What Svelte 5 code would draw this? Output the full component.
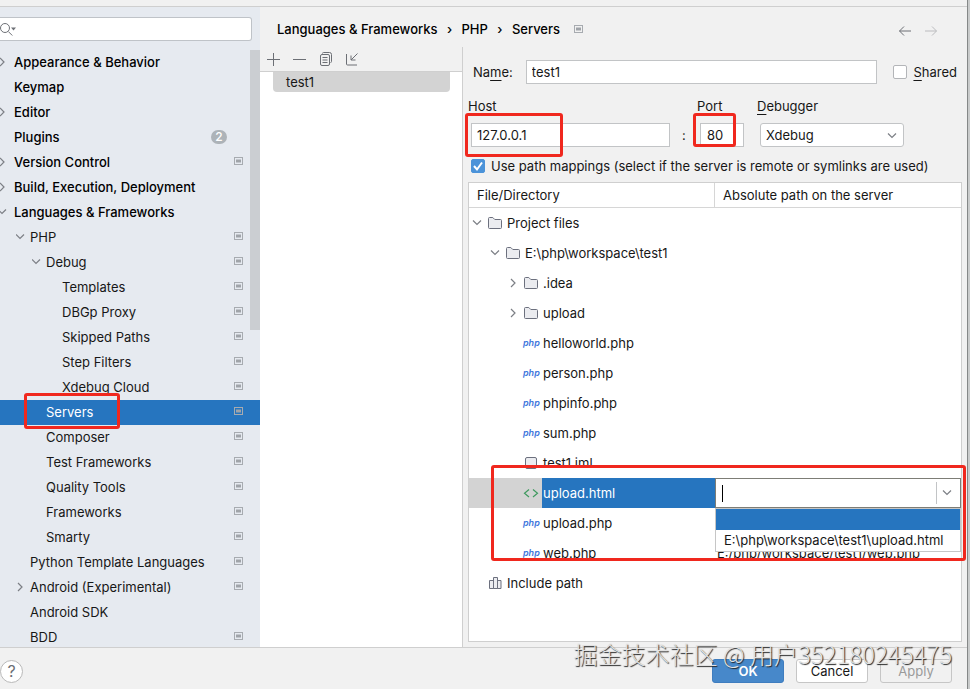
<script>
  const settings = [
    { label: "Appearance & Behavior", level: 0, arrow: "right", bold: true },
    { label: "Keymap", level: 0, bold: true },
    { label: "Editor", level: 0, arrow: "right", bold: true },
    { label: "Plugins", level: 0, bold: true, badge: 2 },
    { label: "Version Control", level: 0, arrow: "right", bold: true, project: true },
    { label: "Build, Execution, Deployment", level: 0, arrow: "right", bold: true },
    { label: "Languages & Frameworks", level: 0, arrow: "down", bold: true },
    { label: "PHP", level: 1, arrow: "down", project: true },
    { label: "Debug", level: 2, arrow: "down", project: true },
    { label: "Templates", level: 3, project: true },
    { label: "DBGp Proxy", level: 3, project: true },
    { label: "Skipped Paths", level: 3, project: true },
    { label: "Step Filters", level: 3, project: true },
    { label: "Xdebug Cloud", level: 3, project: true },
    { label: "Servers", level: 2, project: true, selected: true },
    { label: "Composer", level: 2, project: true },
    { label: "Test Frameworks", level: 2, project: true },
    { label: "Quality Tools", level: 2, project: true },
    { label: "Frameworks", level: 2, project: true },
    { label: "Smarty", level: 2, project: true },
    { label: "Python Template Languages", level: 1, project: true },
    { label: "Android (Experimental)", level: 1, arrow: "right", project: true },
    { label: "Android SDK", level: 1 },
    { label: "BDD", level: 1, project: true },
  ];

  const files = [
    { name: "Project files", level: 0, arrow: "down", icon: "folder" },
    { name: "E:\\php\\workspace\\test1", level: 1, arrow: "down", icon: "folder" },
    { name: ".idea", level: 2, arrow: "right", icon: "folder" },
    { name: "upload", level: 2, arrow: "right", icon: "folder" },
    { name: "helloworld.php", level: 2, icon: "php" },
    { name: "person.php", level: 2, icon: "php" },
    { name: "phpinfo.php", level: 2, icon: "php" },
    { name: "sum.php", level: 2, icon: "php" },
    { name: "test1.iml", level: 2, icon: "module" },
    { name: "upload.html", level: 2, icon: "html", editing: true },
    { name: "upload.php", level: 2, icon: "php" },
    { name: "web.php", level: 2, icon: "php", path: "E:/php/workspace/test1/web.php" },
    { name: "Include path", level: 0, icon: "library" },
  ];

  let search = $state("");
  let name = $state("test1");
  let host = $state("127.0.0.1");
  let port = $state("80");
  let shared = $state(false);
  let useMappings = $state(true);
  let serverPath = $state("");
</script>

{#snippet chevron(dir)}
  <svg class="chevron" width="14" height="14" viewBox="0 0 14 14" aria-hidden="true">
    {#if dir === "right"}
      <path d="M4 3 8 7 4 11" />
    {:else if dir === "down"}
      <path d="M2 4.5 6 8.5 10 4.5" />
    {/if}
  </svg>
{/snippet}

{#snippet projectMark()}
  <svg class="mark" width="10" height="9" viewBox="0 0 10 9" aria-hidden="true">
    <rect x="0.5" y="0.5" width="8" height="7" fill="none" stroke="#a7abb0" />
    <rect x="2" y="2.5" width="5" height="3" fill="#a0a4a9" />
  </svg>
{/snippet}

{#snippet fileIcon(kind)}
  {#if kind === "php"}
    <span class="php-icon">php</span>
  {:else}
    <svg class="file-icon" width="16" height="16" viewBox="0 0 16 16" fill="#ebecf0" stroke="#6c707e" aria-hidden="true">
      {#if kind === "folder"}
        <path d="M1.5 3.5a1 1 0 0 1 1-1h3.3l2 2h5.7a1 1 0 0 1 1 1v7a1 1 0 0 1-1 1h-11a1 1 0 0 1-1-1z" />
      {:else if kind === "module"}
        <rect x="2.5" y="2.5" width="11" height="11" rx="1.5" />
      {:else if kind === "html"}
        <path d="M6 4.5 1.5 8.3 6 12M10 4.5l4.5 3.8L10 12" fill="none" stroke="#3f9a5f" stroke-width="1.2" />
      {:else if kind === "library"}
        <path d="M2.5 5.5h4v8h-4zM6.5 2.5h4v11h-4zM10.5 5.5H14v8h-3.500z" />
      {/if}
    </svg>
  {/if}
{/snippet}

<div class="window">
  <div class="titlebar"></div>

  <div class="main">
    <nav class="sidebar" aria-label="Settings">
      <div class="search">
        <svg width="18" height="16" viewBox="0 0 18 16" fill="none" stroke="#6e7177" aria-hidden="true">
          <circle cx="5" cy="7" r="4.5" />
          <path d="m8.3 10.5 4 4" />
          <path d="M11 6.5h5l-2.5 3z" fill="#6e7177" stroke="none" />
        </svg>
        <input type="text" aria-label="Search settings" bind:value={search} />
      </div>

      <ul class="settings">
        {#each settings as item}
          <li
            class="setting"
            class:bold={item.bold}
            class:selected={item.selected}
            style="padding-left: {item.level * 16}px"
          >
            <span class="arrow" class:root={item.level === 0}>{@render chevron(item.arrow)}</span>
            <span class="label">{item.label}</span>
            {#if item.badge}<span class="badge">{item.badge}</span>{/if}
            {#if item.project}{@render projectMark()}{/if}
            {#if item.selected}<span class="highlight servers"></span>{/if}
          </li>
        {/each}
        <li class="scrollbar" aria-hidden="true"></li>
      </ul>
    </nav>

    <div class="content">
      <header class="header">
        <span>Languages &amp; Frameworks</span>
        <span class="sep">›</span>
        <span>PHP</span>
        <span class="sep">›</span>
        <span>Servers</span>
        <span class="header-mark">{@render projectMark()}</span>
        <div class="history">
          <button type="button" aria-label="Back">
            <svg width="14" height="12" viewBox="0 0 14 12"><path d="M13 6H1.500M6 1.500 1.500 6 6 10.500" /></svg>
          </button>
          <button type="button" aria-label="Forward" disabled>
            <svg width="14" height="12" viewBox="0 0 14 12"><path d="M1 6h11.500M8 1.500 12.500 6 8 10.500" /></svg>
          </button>
        </div>
      </header>

      <div class="columns">
        <section class="servers-list">
          <div class="toolbar">
            <button type="button" aria-label="Add">
              <svg width="14" height="14" viewBox="0 0 14 14"><path d="M6.5 1v13M0 7.5h13" /></svg>
            </button>
            <button type="button" aria-label="Remove">
              <svg width="14" height="14" viewBox="0 0 14 14"><path d="M0 7.5h13" /></svg>
            </button>
            <button type="button" aria-label="Copy">
              <svg width="14" height="14" viewBox="0 0 14 14">
                <path d="M3.500 1.500a1 1 0 0 1 1-1h6a2 2 0 0 1 2 2v7a1 1 0 0 1-1 1" />
                <rect x="1.500" y="2.500" width="9" height="11" rx="1.500" />
                <path d="M3.500 5.500h5M3.500 8h5M3.500 10.500h5" />
              </svg>
            </button>
            <button type="button" aria-label="Import">
              <svg width="14" height="14" viewBox="0 0 14 14"><path d="M1.500 2v10a1 1 0 0 0 1 1H12M12.500 1.500 6 8M6 3.500V8h4.500" /></svg>
            </button>
          </div>
          <ul>
            <li>test1</li>
          </ul>
        </section>

        <form class="form" onsubmit={(e) => e.preventDefault()}>
          <div class="name-row">
            <label for="name">Na<u>m</u>e:</label>
            <input id="name" class="field" type="text" bind:value={name} />
            <label class="check">
              <input type="checkbox" bind:checked={shared} />
              <span><u>S</u>hared</span>
            </label>
          </div>

          <div class="host-row">
            <div class="group">
              <label for="host"><u>H</u>ost</label>
              <input id="host" class="field" type="text" bind:value={host} />
              <span class="highlight host"></span>
            </div>
            <span class="colon">:</span>
            <div class="group port-group">
              <label for="port"><u>P</u>ort</label>
              <input id="port" class="field" type="text" bind:value={port} />
              <span class="highlight port"></span>
            </div>
            <div class="group">
              <label for="debugger"><u>D</u>ebugger</label>
              <div class="select">
                <select id="debugger">
                  <option>Xdebug</option>
                  <option>Zend Debugger</option>
                </select>
                {@render chevron("down")}
              </div>
            </div>
          </div>

          <label class="check mappings">
            <span class="tick">
              <input type="checkbox" bind:checked={useMappings} />
              {#if useMappings}
                <svg width="14" height="14" viewBox="0 0 14 14" aria-hidden="true"><path d="m3 7 3 3.500L11 3.500" /></svg>
              {/if}
            </span>
            <span>Use path mappings (select if the server is remote or symlinks are used)</span>
          </label>

          <div class="table-box">
            <table>
              <thead>
                <tr>
                  <th>File/Directory</th>
                  <th>Absolute path on the server</th>
                </tr>
              </thead>
              <tbody>
                {#each files as file}
                  <tr class:editing={file.editing}>
                    <td>
                      <div class="file" style="padding-left: {file.level * 18 + 2}px">
                        {@render chevron(file.arrow)}
                        {@render fileIcon(file.icon)}
                        <span class="file-name">{file.name}</span>
                        {#if file.editing}<span class="highlight rows"></span>{/if}
                      </div>
                    </td>
                    <td>
                      {#if file.editing}
                        <div class="combo">
                          <input type="text" aria-label="Absolute path on the server" bind:value={serverPath} />
                          <button type="button" aria-label="Show paths">{@render chevron("down")}</button>
                          <ul class="popup">
                            <li class="active"></li>
                            <li>E:\php\workspace\test1\upload.html</li>
                          </ul>
                        </div>
                      {:else}
                        {file.path ?? ""}
                      {/if}
                    </td>
                  </tr>
                {/each}
              </tbody>
            </table>
          </div>
        </form>
      </div>
    </div>
  </div>

  <footer class="footer">
    <button type="button" class="help" aria-label="Help">?</button>
    <div class="actions">
      <button type="button" class="ok">OK</button>
      <button type="button">Cancel</button>
      <button type="button" disabled>Apply</button>
    </div>
    <span class="watermark">掘金技术社区 @ 用户352180245475</span>
  </footer>
</div>

<style>
  :global(body) {
    margin: 0;
    background: #c9cbcb;
  }

  .window,
  .window * {
    box-sizing: border-box;
  }

  .window {
    display: flex;
    flex-direction: column;
    height: 100vh;
    margin-right: 2px;
    overflow: hidden;
    border-right: 1px solid #858888;
    background: #f1f1f1;
    color: #171717;
    font-family: Inter, "Noto Sans CJK SC", sans-serif;
    font-size: 13px;
    line-height: 18px;
  }

  button,
  input,
  select {
    margin: 0;
    font: inherit;
    color: inherit;
    outline: none;
  }

  button {
    padding: 0;
    border: 0;
    background: none;
  }

  ul {
    margin: 0;
    padding: 0;
    list-style: none;
  }

  u {
    text-underline-offset: 3px;
  }

  svg {
    display: block;
    flex: none;
  }

  .chevron {
    fill: none;
    stroke: #7c7f85;
    stroke-width: 1.2;
  }

  .titlebar {
    flex: none;
    height: 7px;
    border-bottom: 1px solid #cfcfcf;
  }

  .main {
    display: flex;
    flex: 1;
    min-height: 0;
  }

  /* settings tree */
  .sidebar {
    display: flex;
    flex-direction: column;
    flex: none;
    width: 260px;
    overflow: hidden;
    background: #e6eaf0;
  }

  .search {
    display: flex;
    align-items: center;
    flex: none;
    height: 24px;
    margin: 10px 8px 9px 0;
    border: 1px solid #bfc3c8;
    border-left: 0;
    border-radius: 0 3px 3px 0;
    background: #fff;
  }

  .search input {
    flex: 1;
    min-width: 0;
    border: 0;
    background: none;
  }

  .settings {
    position: relative;
    flex: 1;
    min-height: 0;
  }

  .setting {
    position: relative;
    display: flex;
    align-items: center;
    height: 25px;
    padding-right: 16px;
    padding-bottom: 2px;
  }

  .arrow {
    width: 14px;
    overflow: hidden;
  }

  .arrow .chevron {
    margin-left: -2px;
  }

  .arrow.root .chevron {
    margin-left: -4px;
  }

  .label {
    flex: 1;
    white-space: nowrap;
  }

  .bold {
    color: #000;
    font-weight: 500;
  }

  .selected {
    background: #2675bf;
    color: #fff;
  }

  .badge {
    width: 16px;
    height: 14px;
    margin-right: 17px;
    border-radius: 7px;
    background: #adb3b8;
    color: #fff;
    font-size: 12px;
    line-height: 14px;
    text-align: center;
  }

  .scrollbar {
    position: absolute;
    top: 0;
    right: 0;
    width: 10px;
    height: 280px;
    background: #cbced2;
  }

  /* right side */
  .content {
    display: flex;
    flex: 1;
    flex-direction: column;
    min-width: 0;
  }

  .header {
    display: flex;
    align-items: center;
    flex: none;
    height: 40px;
    padding: 5px 29px 1px 17px;
    color: #000;
    font-weight: 500;
    white-space: nowrap;
  }

  .sep {
    width: 24px;
    text-align: center;
  }

  .header-mark {
    margin-left: 14px;
  }

  .history {
    display: flex;
    gap: 12px;
    margin-left: auto;
    padding-top: 4px;
  }

  .history svg,
  .toolbar svg {
    fill: none;
    stroke: #6c6f75;
  }

  .history button:disabled {
    opacity: 0.4;
  }

  .columns {
    display: flex;
    flex: 1;
    min-height: 0;
  }

  .servers-list {
    flex: none;
    width: 202px;
    background: #fff;
  }

  .toolbar {
    display: flex;
    align-items: center;
    gap: 12px;
    height: 25px;
    padding-left: 7px;
    border-bottom: 1px solid #cfcfcf;
    background: #f1f1f1;
  }

  .servers-list li {
    height: 20px;
    margin: 0 12px 0 13px;
    padding-left: 13px;
    border-radius: 0 0 4px 4px;
    background: #d3d3d3;
    line-height: 21px;
  }

  .form {
    display: flex;
    flex: 1;
    flex-direction: column;
    min-width: 0;
    padding: 13px 5px 5px;
    border-left: 1px solid #cfcfcf;
  }

  .name-row {
    display: flex;
    align-items: center;
    padding-left: 5px;
  }

  .name-row .field {
    flex: 1;
    min-width: 0;
    margin: 0 16px 0 13px;
  }

  .field {
    height: 24px;
    padding: 0 5px 1px;
    border: 1px solid #c2c4c6;
    background: #fff;
  }

  .check {
    display: flex;
    align-items: center;
    gap: 6px;
  }

  .check input {
    display: block;
    width: 14px;
    height: 14px;
    appearance: none;
    border: 1px solid #b3b5b8;
    border-radius: 2px;
    background: #fff;
  }

  .check input:checked {
    border-color: #4b93d9;
    background: #4b93d9;
  }

  .name-row .check {
    margin-right: 5px;
  }

  .host-row {
    display: grid;
    grid-template-columns: 202fr 27fr 60fr 147fr 58fr;
    margin-top: 13px;
  }

  .group {
    position: relative;
    display: flex;
    flex-direction: column;
    gap: 8px;
    min-width: 0;
  }

  .group .field,
  .select {
    min-width: 0;
    margin-left: 3px;
  }

  .port-group .field {
    width: 44px;
    padding-left: 6px;
  }

  .colon {
    align-self: end;
    padding-left: 12px;
    line-height: 24px;
  }

  .select {
    position: relative;
  }

  select {
    display: block;
    width: 100%;
    height: 24px;
    padding: 0 24px 0 5px;
    appearance: none;
    border: 1px solid #c2c4c6;
    border-radius: 3px;
    background: #fff;
  }

  .select .chevron {
    position: absolute;
    top: 6px;
    right: 4px;
    pointer-events: none;
  }

  .mappings {
    height: 22px;
    margin: 8px 0 5px 3px;
    white-space: nowrap;
  }

  .tick {
    position: relative;
  }

  .tick svg {
    position: absolute;
    inset: 0;
    fill: none;
    stroke: #fff;
    stroke-width: 2;
    pointer-events: none;
  }

  /* path mappings */
  .table-box {
    flex: 1;
    border: 1px solid #cfcfcf;
    background: #fff;
  }

  table {
    width: 100%;
    table-layout: fixed;
    border-spacing: 0;
  }

  th {
    height: 25px;
    padding: 0 8px;
    border-bottom: 1px solid #d6d6d6;
    font-weight: 400;
    text-align: left;
  }

  th:first-child {
    border-right: 1px solid #d6d6d6;
  }

  td {
    height: 30px;
    padding: 0 0 0 2px;
    white-space: nowrap;
  }

  td:first-child,
  .editing td {
    padding: 0;
  }

  .file {
    position: relative;
    display: flex;
    align-items: center;
    height: 30px;
  }

  .file .chevron {
    margin-right: 2px;
  }

  .php-icon {
    width: 16px;
    color: #3d76dc;
    font-size: 9px;
    font-style: italic;
    font-weight: 600;
    line-height: 16px;
  }

  .file-name {
    flex: 1;
    margin-left: 3px;
    padding-left: 1px;
    line-height: 30px;
  }

  .editing .file {
    background: #d3d3d3;
  }

  .editing .file-name {
    background: #2675bf;
    color: #fff;
  }

  .combo {
    position: relative;
    display: flex;
    align-items: center;
    height: 30px;
    border: 1px solid #7d7d76;
    background: #fff;
  }

  /* text caret */
  .combo::before {
    content: "";
    width: 1px;
    height: 17px;
    margin-left: 6px;
    background: #000;
  }

  .combo input {
    flex: 1;
    min-width: 0;
    border: 0;
    caret-color: transparent;
  }

  .combo button {
    height: 22px;
    padding: 0 5px 0 4px;
    border-left: 1px solid #c2c4c6;
  }

  .popup {
    position: absolute;
    z-index: 1;
    top: 29px;
    right: -1px;
    left: -1px;
    border: 1px solid #c6c6c6;
    background: #fff;
  }

  .popup li {
    height: 21px;
    padding-left: 8px;
    line-height: 21px;
  }

  .popup .active {
    background: #2675bf;
  }

  /* red frames */
  .highlight {
    position: absolute;
    z-index: 2;
    border: 3px solid #f0281e;
    border-radius: 3px;
    pointer-events: none;
  }

  .highlight.servers {
    top: -7px;
    left: 24px;
    width: 96px;
    height: 36px;
  }

  .highlight.host {
    top: 16px;
    left: -3px;
    width: 98px;
    height: 44px;
  }

  .highlight.port {
    top: 16px;
    left: -4px;
    width: 43px;
    height: 34px;
  }

  .highlight.rows {
    top: -13px;
    left: 22px;
    width: 475px;
    height: 96px;
  }

  .footer {
    position: relative;
    display: flex;
    flex: none;
    align-items: flex-start;
    justify-content: space-between;
    height: 42px;
    padding: 11px 15px 0 0;
    border-top: 1px solid #cfcfcf;
  }

  .help {
    width: 23px;
    height: 23px;
    margin-top: 1px;
    border: 1px solid #b9b9b9;
    border-radius: 50%;
    background: #fff;
    color: #6c6f75;
    font-size: 16px;
    line-height: 21px;
  }

  .actions {
    display: flex;
    gap: 12px;
  }

  .actions button {
    width: 72px;
    height: 24px;
    border: 1px solid #c6c6c6;
    border-radius: 3px;
    background: #fff;
  }

  .actions .ok {
    border-color: #3f7dbf;
    background: #4788ca;
    color: #fff;
    font-weight: 600;
  }

  .actions button:disabled {
    background: none;
    color: #9a9a9a;
  }

  .watermark {
    position: absolute;
    top: -11px;
    right: 15px;
    color: #e2e2e2;
    font-family: "Noto Sans CJK SC", sans-serif;
    font-size: 24px;
    font-weight: 300;
    line-height: 34px;
    text-shadow: 1px 1px 1px #222;
    white-space: nowrap;
    pointer-events: none;
  }
</style>
